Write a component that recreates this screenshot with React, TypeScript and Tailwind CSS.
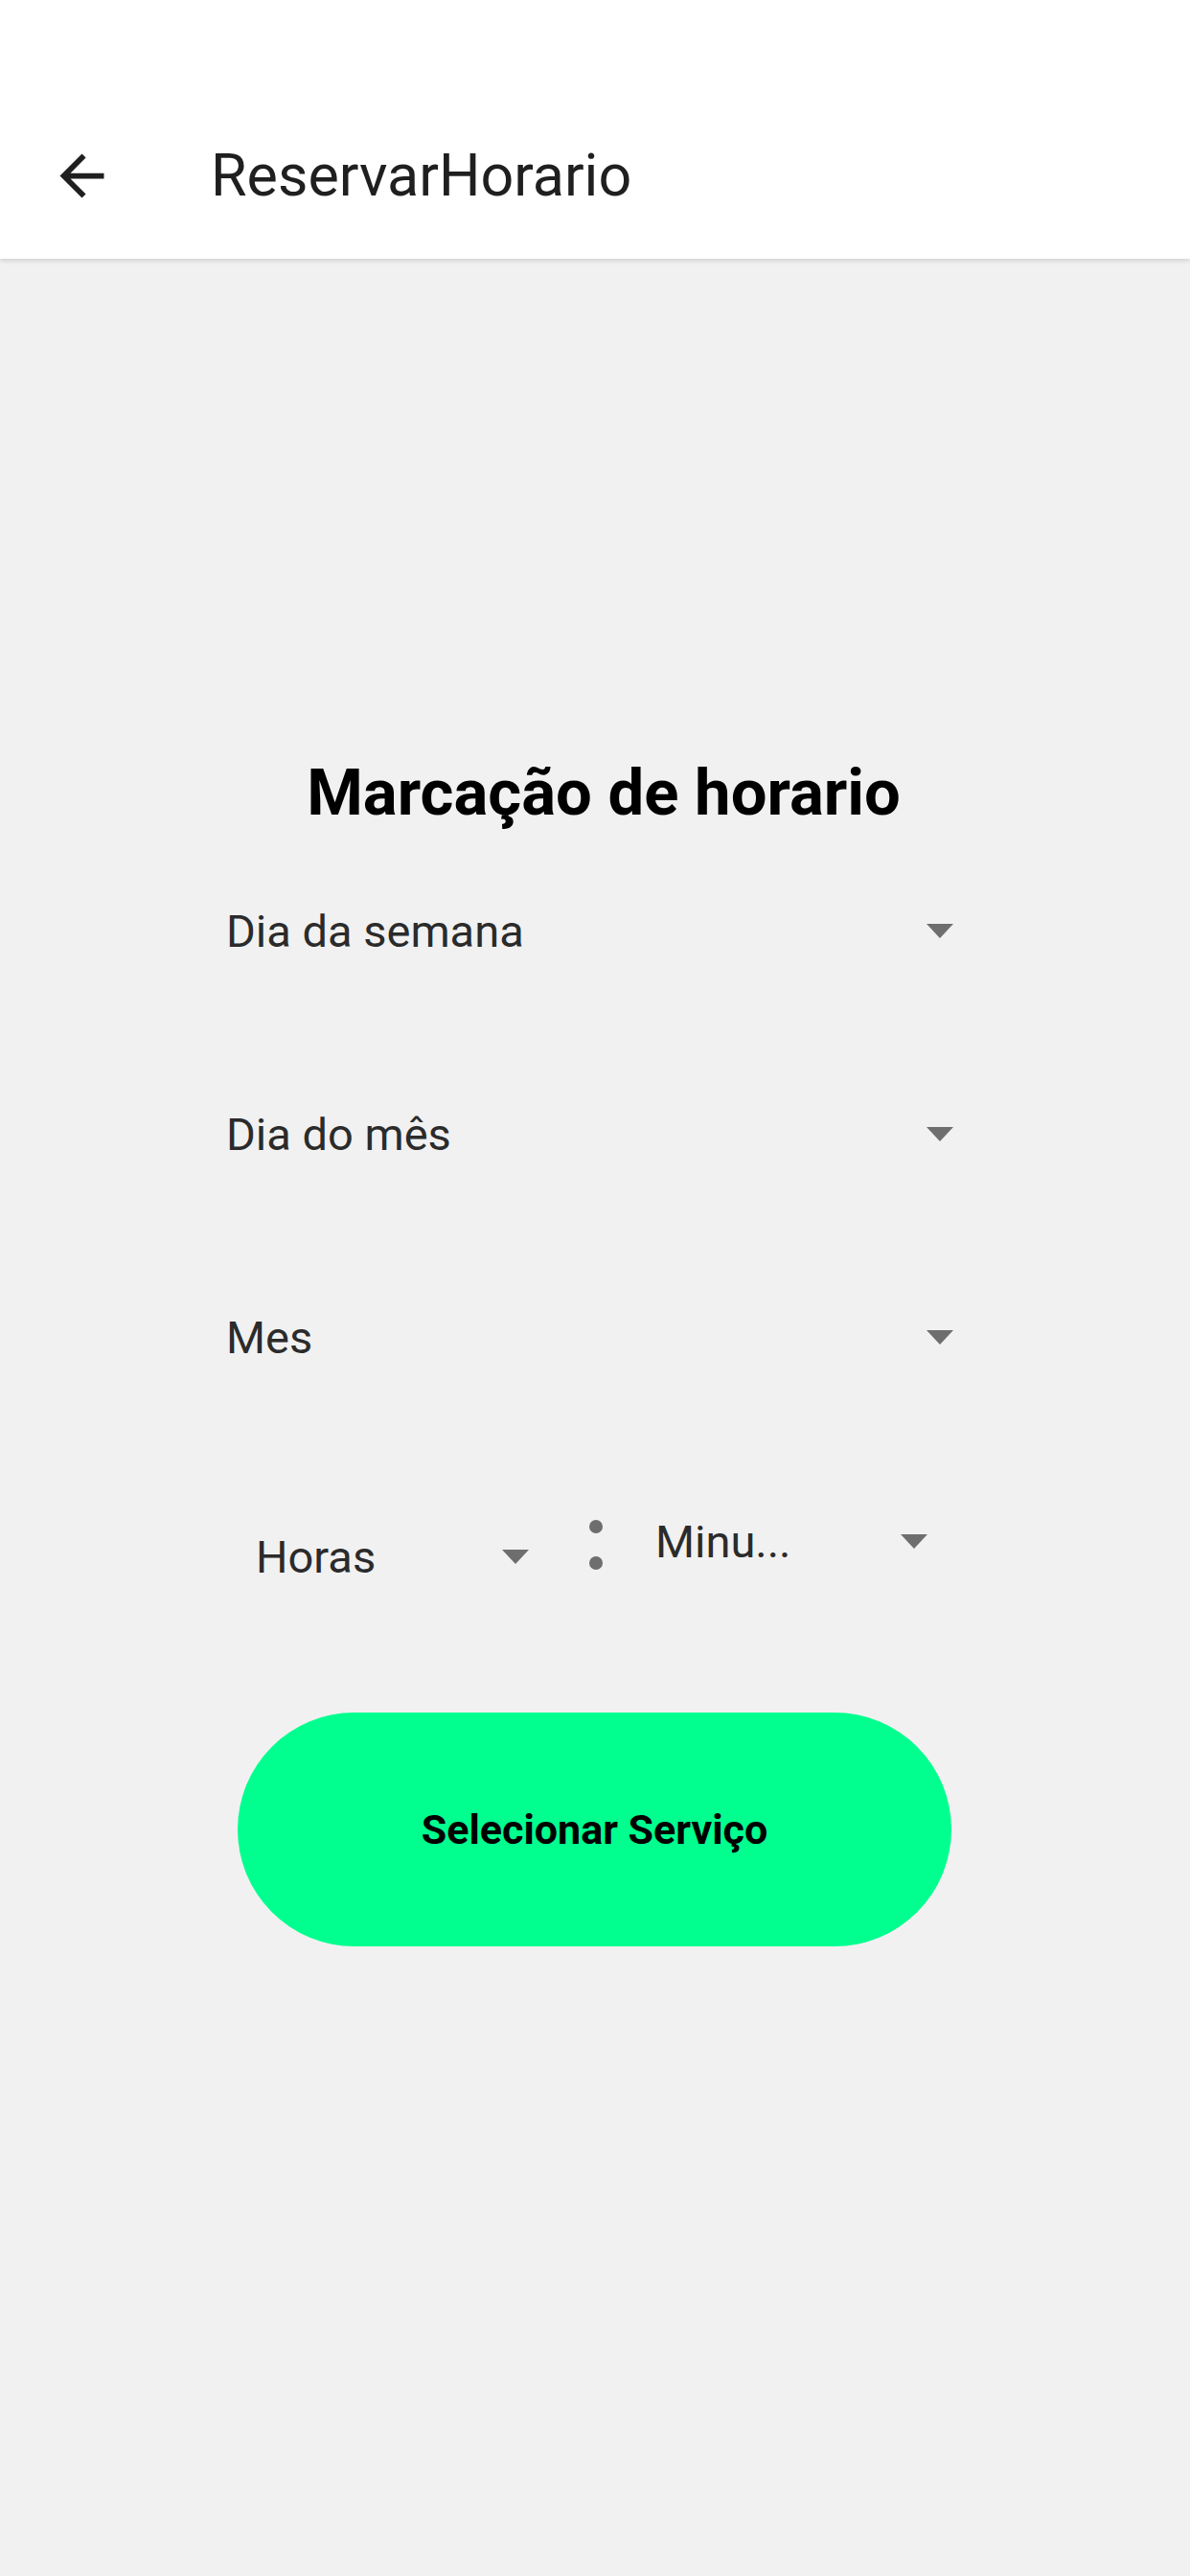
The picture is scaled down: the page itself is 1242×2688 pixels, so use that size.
import React from "react";

function DropArrow() {
  return (
    <svg width="28" height="15" viewBox="0 0 28 15" className="shrink-0">
      <path d="M0 0h28L14 15z" fill="#6e6e6e" />
    </svg>
  );
}

function Spinner({ label, className }: { label: string; className: string }) {
  return (
    <div className={`flex items-center justify-between ${className}`}>
      <span className="text-[47px] leading-none text-[#2b2b2b]">{label}</span>
      <DropArrow />
    </div>
  );
}

export default function App() {
  const fields = ["Dia da semana", "Dia do mês", "Mes"];

  return (
    <div
      className="flex min-h-screen flex-col bg-[#f1f1f1]"
      style={{ fontFamily: "Roboto, 'Noto Sans', sans-serif" }}
    >
      {/* toolbar */}
      <header className="h-[270px] bg-white pt-[120px] shadow-[0_2px_5px_rgba(0,0,0,0.14)]">
        <div className="flex h-[126px] items-center pl-[51px]">
          <svg width="69" height="69" viewBox="0 0 24 24" className="shrink-0">
            <path
              d="M20 11H7.83l5.59-5.59L12 4l-8 8 8 8 1.41-1.41L7.83 13H20v-2z"
              fill="#1f1f1f"
            />
          </svg>
          <h1 className="ml-[100px] text-[61px] leading-none text-[#1f1f1f]">
            ReservarHorario
          </h1>
        </div>
      </header>

      <main className="mx-auto flex w-[800px] flex-col">
        <h2 className="mt-[517px] pl-[18px] text-center text-[67px] font-bold leading-[80px] text-black">
          Marcação de horario
        </h2>

        <div className="mt-[44px] flex flex-col gap-[92px]">
          {fields.map((f) => (
            <Spinner key={f} label={f} className="h-[120px] pl-[15px] pr-[26px]" />
          ))}
        </div>

        {/* time row */}
        <div className="mt-[89px] flex items-start">
          <Spinner label="Horas" className="ml-[31px] mt-[16px] h-[128px] w-[318px] pl-[15px] pr-[18px]" />
          <div className="ml-[45px] mt-[42px] flex flex-col gap-[24px]">
            <div className="h-[14px] w-[14px] rounded-full bg-[#6e6e6e]" />
            <div className="h-[14px] w-[14px] rounded-full bg-[#6e6e6e]" />
          </div>
          <Spinner label="Minu..." className="ml-[40px] h-[128px] w-[323px] pl-[15px] pr-[24px]" />
        </div>

        <button className="ml-[27px] mt-[99px] flex h-[244px] w-[745px] items-center justify-center rounded-full bg-[#00ff8f] text-[43px] font-bold text-black">
          Selecionar Serviço
        </button>
      </main>
    </div>
  );
}
